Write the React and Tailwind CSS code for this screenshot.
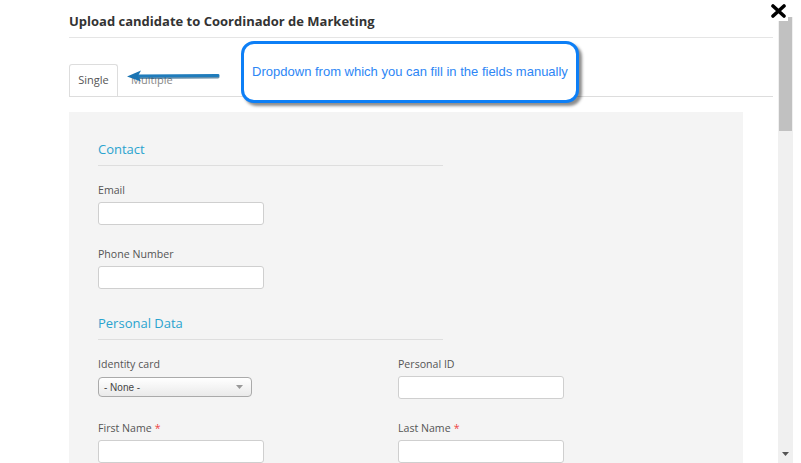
import React from "react";

const Label = ({ children, required }) => (
  <div className="text-[10.6px] leading-[15px] text-[#555]">
    {children}
    {required && <span className="text-[#e44] ml-[3px]">*</span>}
  </div>
);

const Input = ({ className = "" }) => (
  <div
    className={`mt-[4px] w-[166px] h-[23px] bg-white border border-[#cfcfcf] rounded-[3px] ${className}`}
  ></div>
);

const Heading = ({ children }) => (
  <div className="w-[345px] border-b border-[#dedede] pb-[6px] text-[13px] leading-[20px] text-[#2aa3cf]">
    {children}
  </div>
);

export default function App() {
  return (
    <div
      className="relative w-[801px] h-[463px] overflow-hidden bg-white flex"
      style={{ fontFamily: '"Open Sans", "Liberation Sans", sans-serif' }}
    >
      {/* modal body */}
      <div className="flex-1 pl-[69px] pr-[5px]">
        <div className="pt-[12px] pb-[7px] border-b border-[#e5e5e5] text-[13px] leading-[18px] font-bold text-[#333]">
          Upload candidate to Coordinador de Marketing
        </div>

        {/* tabs */}
        <div className="mt-[26px] flex items-end border-b border-[#dddddd]">
          <div className="w-[49px] h-[32px] flex items-center justify-center border border-b-0 border-[#dddddd] rounded-t-[3px] text-[11px] text-[#555]">
            Single
          </div>
          <div className="ml-[13px] h-[32px] flex items-center text-[11px] text-[#888]">
            Multiple
          </div>
        </div>

        {/* form panel */}
        <div className="mt-[15px] w-[674px] h-[400px] bg-[#f4f4f4] pl-[29px] pt-[27px]">
          <Heading>Contact</Heading>
          <div className="mt-[17px]">
            <Label>Email</Label>
            <Input />
          </div>
          <div className="mt-[22px]">
            <Label>Phone Number</Label>
            <Input />
          </div>

          <div className="mt-[24px]">
            <Heading>Personal Data</Heading>
          </div>

          <div className="mt-[17px] grid grid-cols-[300px_300px] gap-y-[22px]">
            <div>
              <Label>Identity card</Label>
              <div className="mt-[5px] w-[154px] h-[20px] flex items-center justify-between px-[5px] border border-[#aaa] rounded-[4px] bg-gradient-to-b from-white to-[#eaeaea] text-[10px] text-[#444]">
                <span style={{ fontFamily: '"Liberation Sans", Arial, sans-serif' }}>- None -</span>
                <svg width="7" height="4" viewBox="0 0 7 4" className="mr-[3px]">
                  <path d="M0 0 L7 0 L3.5 4 Z" fill="#999" />
                </svg>
              </div>
            </div>
            <div>
              <Label>Personal ID</Label>
              <Input />
            </div>
            <div>
              <Label required>First Name</Label>
              <Input />
            </div>
            <div>
              <Label required>Last Name</Label>
              <Input />
            </div>
          </div>
        </div>
      </div>

      {/* scrollbar */}
      <div className="mr-[8px] w-[15px] pt-[17px] flex flex-col bg-white">
        <div className="flex-1 bg-[#f0f0f0] flex flex-col items-center">
          <div className="w-[13px] h-[114px] bg-[#c1c1c1]"></div>
          <div className="flex-1"></div>
          <svg width="7" height="4" viewBox="0 0 7 4" className="mb-[7px]">
            <path d="M0 0 L7 0 L3.5 4 Z" fill="#555" />
          </svg>
        </div>
      </div>

      {/* close button */}
      <div className="absolute left-[768px] top-0 w-[20px] h-[21px] bg-white flex items-center justify-center">
        <svg width="15" height="14" viewBox="0 0 15 14">
          <path d="M2 2 L13 12 M13 2 L2 12" stroke="#000" strokeWidth="3.6" strokeLinecap="round" />
        </svg>
      </div>

      {/* annotation arrow */}
      <svg
        className="absolute left-[124px] top-[68px]"
        width="98"
        height="16"
        viewBox="0 0 98 16"
      >
        <path d="M16 9.5 L94 9" stroke="#0d4a74" strokeWidth="3" strokeLinecap="round" opacity="0.6" />
        <path d="M14 8 L94 7.5" stroke="#1f7cbc" strokeWidth="3" strokeLinecap="round" />
        <path d="M3 8.5 L17 2.5 L14 8 L17 13.5 Z" fill="#1b74b2" />
      </svg>

      {/* annotation callout */}
      <div className="absolute left-[241px] top-[41px] w-[338px] h-[62px] bg-white border-[3px] border-[#0d7ff6] rounded-[13px] shadow-[3px_3px_3px_rgba(0,0,0,0.45)] flex items-center justify-center">
        <span
          className="text-[13px] text-[#2d86f5]"
          style={{ fontFamily: '"Liberation Sans", Arial, sans-serif' }}
        >
          Dropdown from which you can fill in the fields manually
        </span>
      </div>
    </div>
  );
}
